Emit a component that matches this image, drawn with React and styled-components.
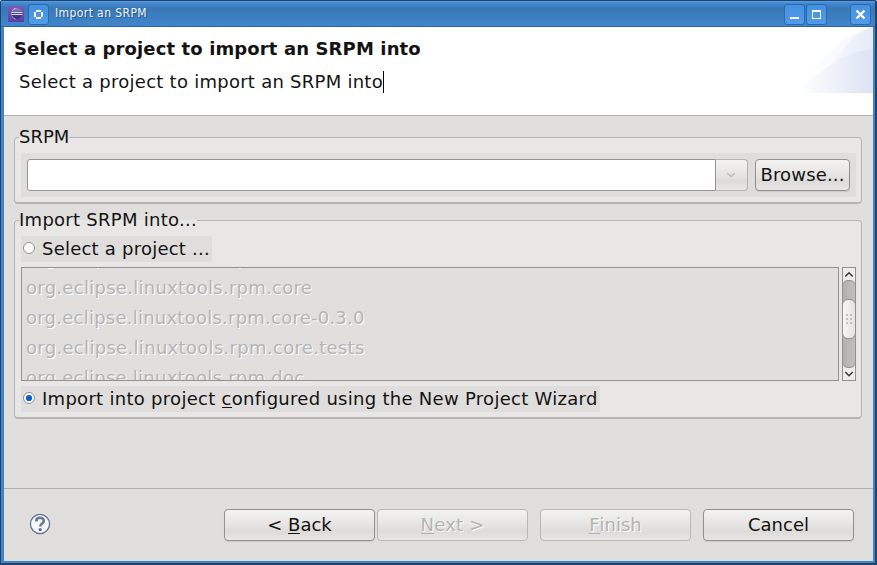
import React from "react";
import styled, { createGlobalStyle, css } from "styled-components";

const Global = createGlobalStyle`
  * { box-sizing: border-box; }
  html, body { margin: 0; padding: 0; overflow: hidden; }
  body { font: 18px/22px "DejaVu Sans", sans-serif; color: #141312; white-space: pre; }
  svg { display: block; flex: none; }
  u { text-decoration: none; box-shadow: 0 -1px 0 currentColor inset; display: inline-block; height: 19px; line-height: 19px; }
`;

const Window = styled.div`
  width: 877px;
  height: 565px;
  display: flex;
  flex-direction: column;
  background: #3f85cc;
  border: solid #1f436b;
  border-width: 1px 2px 2px 1px;
  border-radius: 2px 2px 0 0;
`;

const TitleBar = styled.header`
  height: 26px;
  flex: none;
  display: flex;
  align-items: center;
  padding: 1px 4px 0 7px;
  background: linear-gradient(#5aa0e6 0, #4389d3 2px, #3978b7 7px, #4085cb 24px);
  border-bottom: 1px solid #2b67a5;
`;

const TitleText = styled.span`
  flex: 1;
  font-size: 12px;
  line-height: 16px;
  font-stretch: condensed;
  font-family: "DejaVu Sans Condensed", "DejaVu Sans", sans-serif;
  letter-spacing: ${(p) => p.$spacing}px;
  color: #eef5fc;
  text-shadow: 1px 1px 1px #28527e;
  padding-left: 6px;
  margin-top: -2px;
`;

const TitleButton = styled.div`
  width: 21px;
  height: 21px;
  flex: none;
  margin-left: ${(p) => p.$gap}px;
  display: grid;
  place-items: center;
  background: linear-gradient(#4491e2, #529be9);
  border: 1px solid #2c69a8;
  border-radius: 3px;
`;

const Client = styled.main`
  width: 869px;
  height: 534px;
  margin-left: 3px;
  background: #e0dfdd;
`;

const Banner = styled.section`
  height: 89px;
  display: flex;
  justify-content: space-between;
  background: #fff;
  border-bottom: 1px solid #b1b0ae;
`;

const BannerCopy = styled.div`
  padding: 11px 0 0 10px;
`;

const Heading = styled.h1`
  margin: 0;
  font-size: 18px;
  line-height: 22px;
  letter-spacing: ${(p) => p.$spacing}px;
`;

const Message = styled.div`
  width: max-content;
  height: 22px;
  margin: 11px 0 0 5px;
  border-right: 1px solid #000;
  letter-spacing: ${(p) => p.$spacing}px;
`;

const Body = styled.section`
  height: 373px;
  padding: 10px 11px 0 10px;
  border-bottom: 1px solid #b1b0ae;
`;

const Group = styled.fieldset`
  width: 848px;
  height: ${(p) => p.$height}px;
  margin: 0 0 ${(p) => p.$after || 0}px;
  min-width: 0;
  padding: 0 5px 0 6px;
  border: 1px solid #b5b4b2;
  border-bottom-width: 2px;
  border-radius: 4px;
  background: #e8e7e5;
`;

const Legend = styled.legend`
  height: 22px;
  padding: 0;
  margin-left: -2px;
  letter-spacing: ${(p) => p.$spacing}px;
`;

const FieldRow = styled.div`
  height: 44px;
  margin-top: 5px;
  padding: 6px;
  display: flex;
  background: #dfdedc;
`;

const ComboInput = styled.div`
  width: 689px;
  height: 32px;
  background: #fff;
  border: 1px solid #959492;
  border-radius: 3px 0 0 3px;
`;

const raised = css`
  background: linear-gradient(#f3f3f2, #e7e6e5 45%, #dddcda 72%, #e8e7e6);
`;

const ComboArrow = styled.div`
  ${raised}
  width: 32px;
  height: 32px;
  display: grid;
  place-items: center;
  padding-right: 2px;
  border: 1px solid #b5b4b2;
  border-left: 0;
  border-radius: 0 4px 4px 0;
`;

const Button = styled.div`
  ${raised}
  width: ${(p) => p.$width || 151}px;
  height: 32px;
  flex: none;
  margin-left: ${(p) => p.$gap}px;
  display: flex;
  align-items: center;
  justify-content: center;
  border: 1px solid ${(p) => (p.$disabled ? "#b8b7b5" : "#92918f")};
  border-radius: 4px;
  box-shadow: ${(p) => (p.$disabled ? "none" : "0 1px 1px #cccbc9")};
  color: ${(p) => (p.$disabled ? "#b5b4b4" : "#141312")};
  text-shadow: ${(p) => (p.$disabled ? "1px 1px 0 #fff" : "none")};
  letter-spacing: ${(p) => p.$spacing || 0}px;
`;

const RadioRow = styled.div`
  width: ${(p) => p.$width}px;
  height: 26px;
  margin-top: ${(p) => p.$before}px;
  display: flex;
  align-items: center;
  padding-left: 1px;
  gap: 6px;
  background: #dfdedc;
  letter-spacing: ${(p) => p.$spacing}px;
  svg { margin-bottom: 2px; }
`;

const ListRow = styled.div`
  display: flex;
  gap: 3px;
  margin-top: 5px;
`;

const ProjectList = styled.div`
  width: 818px;
  height: 114px;
  overflow: hidden;
  border: 1px solid #92918f;
  background: #e0dfdd;
  color: #b5b4b6;
  text-shadow: 1px 1px 0 #fff;
`;

const ListLines = styled.div`
  margin-top: -25px;
  padding-left: 4px;
`;

const Project = styled.div`
  height: 30px;
  line-height: 30px;
  letter-spacing: ${(p) => p.$spacing}px;
`;

const ScrollBar = styled.div`
  width: 14px;
  height: 114px;
  display: flex;
  flex-direction: column;
  align-items: center;
  justify-content: space-between;
  border: 1px solid #92918f;
  background: #eeedec;
`;

const Trough = styled.div`
  width: 14px;
  height: 88px;
  flex: none;
  margin: 0 -1px;
  padding-top: 18px;
  border: 1px solid #92918f;
  border-radius: 6px;
  background: linear-gradient(90deg, #b2b1af, #c0bfbd);
`;

const Thumb = styled.div`
  width: 14px;
  height: 40px;
  margin-left: -1px;
  display: grid;
  place-items: center;
  border: 1px solid #92918f;
  border-radius: 6px;
  background: linear-gradient(90deg, #f7f7f6, #e3e2e0);
`;

const Footer = styled.footer`
  height: 72px;
  display: flex;
  align-items: center;
  padding: 0 19px 0 25px;
  > svg { margin-bottom: 2px; }
`;

const Spacer = styled.div`
  flex: 1;
`;

const EclipseLogo = () => (
  <svg width="16" height="16" viewBox="0 0 16 16">
    <defs>
      <linearGradient id="logoBack" y2="1" x2="0"><stop stopColor="#7a5cb8" /><stop offset="1" stopColor="#5a3fa4" /></linearGradient>
      <linearGradient id="logoBall" y2="1" x2="0"><stop stopColor="#9a94cc" /><stop offset=".5" stopColor="#4a3f8c" /><stop offset="1" stopColor="#37307a" /></linearGradient>
    </defs>
    <rect width="16" height="16" fill="url(#logoBack)" />
    <path d="M8 1.8A6 6 0 0 0 8 13.4L5 7.5Z" fill="#f5dfe8" />
    <circle cx="8.9" cy="7.6" r="5.3" fill="url(#logoBall)" />
    <path d="M3.5 6.5H14.3M3.5 8.5H14.3" stroke="#dcd9ee" />
  </svg>
);

const Icon = ({ kind }) => (
  <svg width="11" height="11" viewBox="0 0 11 11" fill="none" stroke="#fff" strokeWidth="2">
    {kind === "menu" && <path d="M3 2H8M3 9H8M2 3V8M9 3V8" />}
    {kind === "min" && <path d="M1 9H10" />}
    {kind === "max" && <path d="M1 1H10V10H1ZM2 3V9H9V3Z" fill="#fff" fillRule="evenodd" stroke="none" />}
    {kind === "close" && <path d="M1.5 1.5L9.5 9.5M9.5 1.5L1.5 9.5" strokeWidth="2.3" />}
  </svg>
);

const BannerArt = () => (
  <svg width="75" height="66" viewBox="0 0 75 66">
    <defs>
      <linearGradient id="bannerFade"><stop stopColor="#fff" /><stop offset=".45" stopColor="#f0f3fb" /><stop offset="1" stopColor="#dce2f4" /></linearGradient>
      <linearGradient id="bannerPale"><stop stopColor="#fff" /><stop offset="1" stopColor="#f3f6fc" /></linearGradient>
      <linearGradient id="bannerCrest"><stop stopColor="#f6f8fd" /><stop offset="1" stopColor="#e6ebf8" /></linearGradient>
    </defs>
    <path d="M0 66C20 34 43 7 75 0V66Z" fill="url(#bannerPale)" />
    <path d="M34 38C45 20 57 5 75 0V30Z" fill="url(#bannerCrest)" />
    <path d="M0 66C22 43 44 25 75 22V66Z" fill="url(#bannerFade)" />
  </svg>
);

const Chevron = ({ up, pale }) => (
  <svg width="12" height="12" viewBox="0 0 12 12" fill="none" stroke={pale ? "#b9b8b7" : "#3e3d3b"} strokeWidth={pale ? 1.3 : 1.6}>
    <path d={up ? "M2.3 8.5L6 4.8L9.7 8.5" : "M2.3 4L6 7.7L9.7 4"} />
  </svg>
);

const Radio = ({ checked }) => (
  <svg width="14" height="14" viewBox="0 0 14 14">
    <circle cx="7" cy="7" r="5.5" fill="#fff" stroke="#92918f" />
    {checked && <circle cx="7" cy="7" r="3.1" fill="#0861c6" />}
  </svg>
);

const Grip = () => (
  <svg width="8" height="12" viewBox="0 0 8 12" fill="#c2c1bf">
    {[1, 5, 9].map((y) => [1, 5].map((x) => <rect key={`${x}-${y}`} x={x} y={y} width="2" height="2" />))}
  </svg>
);

const Help = () => (
  <svg width="22" height="22" viewBox="0 0 22 22">
    <circle cx="11" cy="11" r="9.6" fill="#f7f8fa" stroke="#63738f" strokeWidth="1.3" />
    <path d="M7.2 8.4C7.2 3.5 14.8 3.8 14.8 7.9C14.8 10.5 11.3 10.7 11.3 13.5" fill="none" stroke="#68799a" strokeWidth="2.7" />
    <rect x="9.6" y="15.2" width="3.2" height="2.7" rx="1" fill="#596b90" />
  </svg>
);

const projects = [
  { name: "org.eclipse.linuxtools.rpm", spacing: 0.28 },
  { name: "org.eclipse.linuxtools.rpm.core", spacing: 0.28 },
  { name: "org.eclipse.linuxtools.rpm.core-0.3.0", spacing: 0.24 },
  { name: "org.eclipse.linuxtools.rpm.core.tests", spacing: 0.31 },
  { name: "org.eclipse.linuxtools.rpm.doc", spacing: 0.25 },
];

export default function App() {
  return (
    <>
      <Global />
      <Window>
        <TitleBar>
          <EclipseLogo />
          <TitleButton $gap={4}><Icon kind="menu" /></TitleButton>
          <TitleText $spacing={0.41}>Import an SRPM</TitleText>
          <TitleButton $gap={0}><Icon kind="min" /></TitleButton>
          <TitleButton $gap={1}><Icon kind="max" /></TitleButton>
          <TitleButton $gap={23}><Icon kind="close" /></TitleButton>
        </TitleBar>
        <Client>
          <Banner>
            <BannerCopy>
              <Heading $spacing={0.12}>Select a project to import an SRPM into</Heading>
              <Message $spacing={0.26}>Select a project to import an SRPM into</Message>
            </BannerCopy>
            <BannerArt />
          </Banner>
          <Body>
            <Group $height={78} $after={5}>
              <Legend $spacing={0}>SRPM</Legend>
              <FieldRow>
                <ComboInput />
                <ComboArrow><Chevron pale /></ComboArrow>
                <Button $width={95} $gap={7} $spacing={0.15}>Browse...</Button>
              </FieldRow>
            </Group>
            <Group $height={210}>
              <Legend $spacing={0.27}>Import SRPM into...</Legend>
              <RadioRow $width={191} $before={5} $spacing={0.23}><Radio />Select a project ...</RadioRow>
              <ListRow>
                <ProjectList>
                  <ListLines>
                    {projects.map((p) => <Project key={p.name} $spacing={p.spacing}>{p.name}</Project>)}
                  </ListLines>
                </ProjectList>
                <ScrollBar>
                  <Chevron up />
                  <Trough><Thumb><Grip /></Thumb></Trough>
                  <Chevron />
                </ScrollBar>
              </ListRow>
              <RadioRow $width={579} $before={5} $spacing={0.285}><Radio checked /><span>Import into project <u>c</u>onfigured using the New Project Wizard</span></RadioRow>
            </Group>
          </Body>
          <Footer>
            <Help />
            <Spacer />
            <Button $gap={0}><span>{"< "}<u>B</u>ack</span></Button>
            <Button $gap={2} $disabled $spacing={0.2}><span><u>N</u>{"ext >"}</span></Button>
            <Button $gap={12} $disabled><span><u>F</u>inish</span></Button>
            <Button $gap={12}>Cancel</Button>
          </Footer>
        </Client>
      </Window>
    </>
  );
}
